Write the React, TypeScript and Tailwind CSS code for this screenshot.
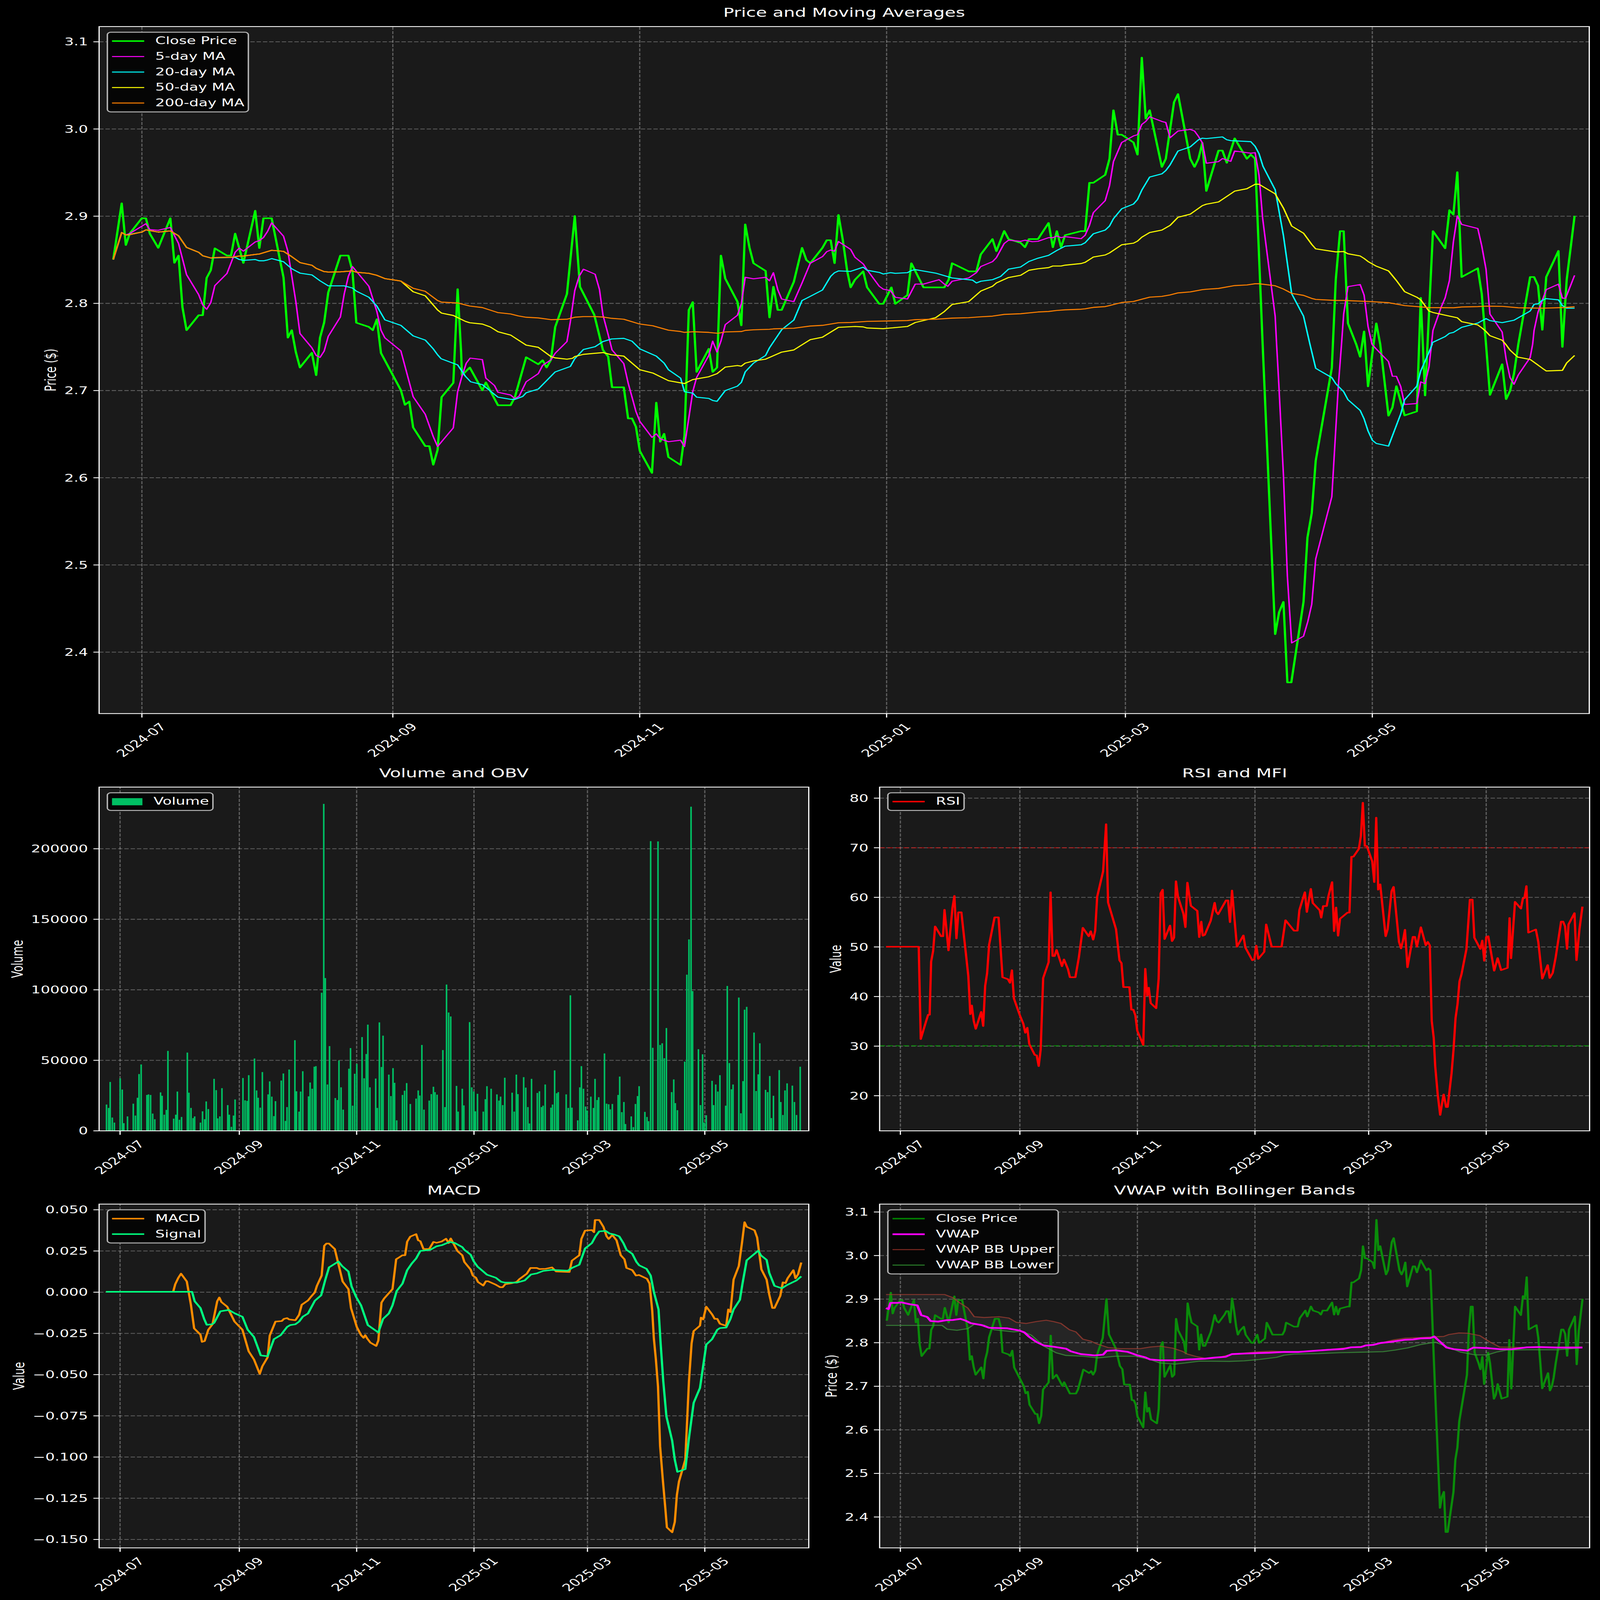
import React from "react";

type P = [number, number];
const seg = (ox: number, sx: number, oy: number, sy: number, a: number[]): P[] => {
  const r: P[] = [];
  for (let i = 0; i < a.length; i += 2) r.push([ox + a[i] / sx, oy + a[i + 1] / sy]);
  return r;
};
const Z9 = (a: number[]) => seg(240, 1.568, 700, 1.12, a);
const Z8 = (a: number[]) => seg(1000, 0.825, 700, 1.12, a);
const Z2 = (a: number[]) => seg(2900, 0.998, 100, 1.206, a);
const Z3 = (a: number[]) => seg(2900, 0.998, 1400, 0.922, a);
const Z5 = (a: number[]) => seg(2300, 0.722, 3050, 0.871, a);
const Z6 = (a: number[]) => seg(0, 0.682, 4780, 0.908, a);
const Z7 = (a: number[]) => seg(2300, 0.722, 4780, 0.908, a);
const pts = (a: P[]) => a.map((p) => `${p[0].toFixed(1)},${p[1].toFixed(1)}`).join(" ");

const close: P[] = [
  ...Z9([120,398,157,142,175,332,192,280,245,210,263,210,280,280,317,345,370,210,388,413,406,380,423,615,441,720,494,652,512,652,529,482,547,447,565,347,618,380,636,380,654,280,690,414,742,176,760,346,778,210,814,210,866,480,885,754,902,720,920,820,938,890,990,823,1009,925,1026,754,1044,685,1062,548,1115,380,1150,380,1168,450,1185,686,1240,705,1257,720,1275,670,1293,824,1380,993,1398,1060,1417,1045,1434,1163,1487,1248,1505,1248,1522,1333,1541,1265]),
  ...Z8([193,1025,220,960,230,533,238,820,240,925,258,890,287,994,295,958,323,1062,352,1062,362,1025,388,843,416,875,426,857,435,890,445,855,455,705,482,555,500,200,512,522,545,650,565,810,577,840,586,980,613,980,623,1122,632,1122,641,1160,650,1270,678,1370,688,1050,697,1228,706,1192,716,1298,744,1334,753,1200,763,628,772,592,781,910,809,805,818,910,828,890,837,380,847,485,875,590,884,698,893,238,903,345,912,415,940,450,949,662,958,522,968,628,977,628,1005,500,1024,345,1034,400,1043,415,1071,345,1081,310,1090,310,1099,415,1108,195,1118,310,1128,450,1136,525,1146,490,1165,452,1174,525,1202,600,1211,600,1230,525,1239,600,1267,560,1276,415,1304,525,1352,525,1362,490,1370,415,1408,452,1426,452,1436,375,1463,305,1472,360,1490,268,1500,305,1528,322,1538,342,1547,305,1568,305]),
  ...Z2([30,973,42,1092,53,1013,65,1092,76,1033,121,1013,132,1013,144,776,155,776,188,737,200,658,211,420,223,540,234,540,267,578,278,638,290,162,301,461,312,420,346,698,357,658,380,380,391,341,425,658,437,698,448,658,459,580,470,816,504,618,515,618,527,678,538,618,549,558,583,658,594,638,606,658]),
  ...Z3([627,0,662,1087,673,1005,685,966,696,1268,707,1268,741,966,752,725,764,633,775,437,820,89]),
  ...Z2([823,1568,831,1250,843,1013,853,1013,865,1465,888,1568]),
  ...Z3([899,47]),
  ...Z2([910,1505]),
  ...Z3([921,158]),
  ...Z2([944,1465,955,1568]),
  ...Z3([978,268,989,237,1000,157,1023,267,1057,252]),
  ...Z2([1068,1340]),
  ...Z3([1080,192]),
  ...Z2([1102,1013,1136,1097,1148,910,1159,932,1170,724,1182,1238,1227,1195,1238,1320,1250,1568]),
  ...Z3([1261,190,1295,75,1306,206,1317,175,1328,110]),
  ...Z2([1340,1568,1373,1238,1384,1238,1395,1280,1407,1497,1418,1238,1452,1110]),
  ...Z3([1463,10]),
  ...Z2([1475,1250,1497,938]),
];

const ma5: P[] = [
  ...Z9([120,398,157,275,175,286,192,280,263,235,280,262,317,265,370,252,406,325,441,467,494,558,512,605,529,625,547,595,565,517,618,462,654,365,672,346,690,360,742,318,760,312,778,298,796,270,814,231,866,292,885,360,920,590,938,735,990,800,1009,835,1026,844,1044,815,1062,748,1115,660,1132,555,1150,475,1168,430,1240,520,1275,635,1293,720,1310,755,1380,814,1434,1023,1487,1103,1522,1205,1541,1250]),
  ...Z8([193,1228,220,1165,230,1000,240,930,250,870,259,847,287,854,295,938,315,972,323,1003,352,1015,362,1032,372,1020,388,955,416,918,426,880,445,855,455,825,482,772,490,680,500,540,510,475,520,442,547,465,557,535,565,650,577,740,586,810,613,872,623,960,641,1090,650,1135,678,1208,688,1192,697,1215,716,1228,744,1221,753,1250,763,1120,772,1000,781,935,809,835,818,770,828,820,837,770,847,695,875,652,884,600,893,479,912,486,940,479,949,495,958,458,968,535,977,578,1005,590,1024,505,1043,415,1071,385,1081,362,1090,355,1099,360,1108,316,1136,352,1146,388,1165,418,1174,445,1202,520,1211,533,1228,540,1239,570,1267,578,1285,510,1304,510,1340,490,1352,510,1360,520,1370,497,1408,482,1426,458,1436,430,1463,408,1472,390,1490,325,1500,310,1528,315,1538,310,1555,317,1568,315]),
  ...Z2([30,1045,42,1045,53,1037,65,1045,76,1040,121,1050,132,1033,144,985,155,922,188,863,200,790,211,672,234,578,267,546,278,540,290,490,301,475,312,452,346,475,357,480,369,555,391,522,425,514,437,522,448,548,459,580,470,680,504,672,515,657,538,671,549,620,594,631,606,628,617,740,627,950,640,1130,662,1430,666,1568]),
  ...Z3([672,145,685,490,696,870,708,1120,741,1095,753,1040,764,975,775,805,820,572,838,158,847,0]),
  ...Z2([853,1420,865,1285,899,1275,910,1327,921,1480,932,1568]),
  ...Z3([944,18,978,65,989,120,1000,120,1012,158,1023,226,1057,222,1068,141,1080,148,1091,85,1098,0]),
  ...Z2([1102,1500,1125,1385,1136,1340,1148,1255,1159,1065,1170,938,1182,980,1227,1000,1238,1085,1250,1200,1261,1420,1295,1508,1300,1568]),
  ...Z3([1306,55,1317,125,1328,150,1340,115,1373,50,1380,0]),
  ...Z2([1384,1500,1395,1410,1418,1300,1452,1273,1463,1342,1472,1342,1497,1230]),
];

const ma20: P[] = [
  ...Z9([120,398,157,275,175,286,245,273,263,263,317,273,370,268,406,290,441,343,494,365,512,381,547,391,618,389,654,388,672,398,690,402,742,398,760,404,778,404,796,400,814,394,866,408,902,440,938,460,990,468,1026,495,1062,518,1132,518,1168,528,1185,542,1240,570,1275,610,1310,673,1380,698,1434,746,1487,765,1522,805,1541,832]),
  ...Z8([192,850,230,878,248,930,260,955,287,968,323,1025,352,1035,362,1035,380,1022,388,1005,416,988,455,910,490,885,500,850,520,808,547,795,565,772,585,760,613,757,632,770,650,805,688,838,706,870,716,900,744,938,753,1000,772,1007,781,1025,809,1031,818,1040,828,1044,847,995,875,975,884,958,893,910,912,870,940,835,949,800,977,718,1005,674,1024,585,1034,575,1071,537,1090,475,1099,458,1108,450,1136,452,1165,433,1174,447,1202,457,1211,464,1228,458,1239,461,1267,458,1276,448,1285,444,1332,460,1370,482,1417,492,1426,505,1436,497,1463,490,1482,475,1500,442,1528,432,1547,407,1568,392]),
  ...Z2([30,1132,53,1108,76,1087,121,1080,132,1070,155,1026,188,1008,200,988,211,952,234,903,267,880,278,858,290,812,312,748,346,732,357,716,369,688,391,620,425,600,448,565,459,557,470,559,515,551,527,565,538,569,594,574,606,597,617,633,628,695,662,810,685,1035,708,1320,741,1430,759,1568]),
  ...Z3([775,90,785,98,820,125,831,148,853,178,865,208,899,248,910,280,921,325,933,360,944,372,978,382,1012,262,1023,208,1057,157,1068,100,1091,30,1100,0]),
  ...Z2([1100,1560,1136,1530,1148,1514,1159,1510,1182,1485,1227,1464,1250,1442,1261,1452,1295,1462,1328,1450,1373,1405,1384,1372,1395,1370,1407,1352,1418,1344,1452,1350,1463,1378,1475,1391,1497,1391]),
];

const ma50: P[] = [
  ...Z9([120,398,157,275,175,286,192,285,245,273,263,263,317,273,370,268,406,290,441,343,494,365,512,381,547,391,565,389,636,388,672,382,690,382,742,375,760,373,814,356,866,361,902,385,938,412,990,424,1009,438,1044,453,1062,455,1115,454,1168,450,1185,456,1240,461,1275,470,1310,485,1380,496,1434,545,1487,563,1541,628,1558,642]),
  ...Z8([220,653,248,680,258,686,287,692,305,705,323,727,352,742,388,788,416,798,445,840,455,846,482,852,495,848,500,840,520,830,565,822,585,832,613,838,650,900,680,915,716,950,753,963,772,945,809,932,828,918,847,888,875,881,884,884,893,870,912,860,940,852,977,820,1005,810,1043,763,1071,752,1108,707,1146,703,1165,705,1174,710,1211,713,1240,708,1267,703,1285,685,1332,663,1352,635,1370,603,1408,590,1436,542,1463,520,1472,505,1500,480,1528,470,1547,447,1568,440]),
  ...Z2([30,1192,42,1184,65,1184,76,1180,121,1172,132,1166,155,1140,188,1130,200,1120,234,1080,267,1072,278,1062,290,1043,312,1020,346,1008,369,985,391,945,425,930,459,888,470,881,504,870,549,817,583,805,606,783,617,783,662,830,685,900,708,988,741,1023,764,1078,775,1100,831,1115,853,1113,865,1124,899,1135,910,1147,921,1162,944,1185,978,1208,1000,1255,1023,1310,1057,1337,1068,1350,1091,1405,1102,1412,1148,1430,1170,1438,1182,1457,1227,1473,1238,1487,1250,1505,1261,1526,1295,1548,1305,1568]),
  ...Z3([1317,22,1338,48,1373,57,1395,78,1407,90,1418,100,1463,98,1475,70,1497,42]),
];

const ma200: P[] = [
  ...Z9([120,398,157,275,175,286,192,285,245,273,263,263,317,273,370,268,406,290,441,343,494,365,512,381,547,391,565,389,636,388,672,382,690,382,742,375,760,373,814,356,866,361,902,385,938,412,990,424,1009,438,1044,453,1062,455,1115,454,1168,450,1185,456,1240,461,1275,470,1310,485,1380,496,1434,529,1487,543,1541,585,1558,592]),
  ...Z8([230,596,258,610,287,617,323,640,352,646,370,655,388,661,416,664,445,672,482,670,500,661,520,658,547,658,565,660,585,666,613,670,650,692,680,700,716,720,744,726,753,730,772,727,809,730,830,734,847,728,884,726,893,721,912,718,949,716,958,714,1005,711,1043,701,1071,698,1108,686,1136,685,1174,680,1267,676,1285,672,1332,670,1370,665,1408,663,1436,659,1463,656,1490,648,1528,645,1568,637]),
  ...Z2([30,1407,53,1402,76,1399,121,1396,132,1394,155,1387,188,1383,200,1378,234,1363,267,1358,290,1347,312,1337,346,1333,369,1326,391,1316,425,1311,459,1300,470,1298,504,1294,549,1280,583,1277,606,1271,617,1271,662,1281,685,1297,708,1318,741,1328,764,1343,775,1348,831,1353,853,1353,933,1359,978,1364,1023,1378,1091,1388,1160,1389,1182,1385,1227,1383,1250,1381,1295,1382,1340,1389,1407,1391,1463,1388,1497,1384]),
];

const rsi = Z5([127,697,193,697,197,1024,208,960,212,938,215,938,218,750,222,712,226,625,238,660,242,660,245,566,253,710,261,560,265,517,269,668,273,575,279,575,288,720,293,800,297,936,300,905,304,960,308,988,319,928,323,978,327,836,331,790,335,690,346,593,354,593,362,805,373,812,377,825,381,780,385,880,397,940,404,970,408,1002,412,984,416,1042,427,1080,431,1082,435,1120,439,1062,444,808,455,752,459,504,463,730,467,730,471,708,482,766,486,742,494,776,498,805,509,805,516,735,524,630,536,660,540,642,545,672,549,640,553,520,565,430,571,263,575,540,591,635,598,745,602,755,606,840,618,840,622,920,626,920,630,940,634,995,646,1045,650,775,654,870,657,842,661,897,672,915,677,810,681,508,685,495,689,670,700,622,704,677,708,665,712,465,716,520,727,580,731,628,735,470,742,552,755,570,759,663,763,608,766,658,770,655,782,605,790,541,793,572,797,582,813,533,817,533,821,610,825,498,835,697,848,657,852,700,866,745,870,742,874,693,878,740,890,715,894,618,905,697,925,697,933,603,950,640,957,640,961,567,972,504,976,574,984,492,988,542,1002,568,1005,594,1009,553,1016,553,1020,515,1027,468,1031,642,1035,558,1039,658,1043,598,1058,576,1062,576,1066,378,1070,378,1081,350,1085,305,1089,187,1093,340,1097,340,1108,395,1112,468,1116,240,1120,495,1124,476,1135,660,1139,635,1147,500,1151,485,1158,610,1162,680,1166,703,1170,675,1174,637,1179,770,1190,662,1194,662,1198,697,1206,628,1216,692,1220,680,1224,692,1228,960,1232,1020,1235,1120,1240,1220,1245,1293,1249,1250,1252,1220,1257,1265,1260,1265,1268,1145,1272,1060,1276,950,1280,900,1284,820,1288,795,1298,705,1305,530,1310,530,1314,665,1326,705,1330,675,1334,747,1338,662,1342,660,1354,782,1361,737,1368,780,1381,772,1385,595,1388,738,1396,538,1408,562,1412,525,1415,525,1419,482,1423,647,1438,636,1443,680,1451,810,1462,762,1466,808,1472,790,1478,735,1489,608,1493,608,1497,625,1501,705,1504,618,1516,578,1520,745,1526,635,1532,555]);

const macd = Z6([202,430,330,430,334,402,340,378,345,363,356,392,364,480,370,565,382,588,385,615,390,612,397,570,405,550,414,465,418,451,422,468,433,485,447,540,462,570,474,650,484,680,495,733,500,705,510,672,514,592,525,540,537,538,541,530,547,527,551,532,563,535,570,515,575,478,587,462,592,450,600,432,604,408,613,370,618,260,622,252,627,252,638,272,644,320,653,392,664,420,669,490,680,560,688,590,693,600,696,590,700,603,706,618,717,630,721,610,727,470,732,455,748,420,755,310,767,295,772,295,776,245,782,226,793,217,797,240,801,243,807,272,818,272,826,246,832,249,842,244,850,234,855,250,859,233,872,280,881,295,885,320,897,348,901,370,907,378,911,394,921,407,926,391,930,391,945,404,953,413,958,413,963,402,976,398,985,393,990,383,1004,363,1011,342,1023,342,1028,346,1040,345,1052,340,1060,355,1085,357,1090,315,1104,295,1108,235,1115,204,1128,202,1132,210,1134,165,1142,165,1150,190,1156,225,1160,235,1167,220,1175,240,1183,295,1190,310,1194,342,1205,350,1212,370,1218,368,1233,382,1238,400,1243,500,1246,600,1250,680,1254,780,1258,1000,1263,1120,1268,1230,1271,1300,1281,1318,1286,1280,1290,1180,1294,1130,1306,1050,1313,760,1318,620,1322,575,1334,555,1336,525,1340,532,1346,485,1357,513,1362,530,1367,530,1372,548,1384,556,1388,495,1392,505,1398,385,1408,335,1414,250,1419,173,1423,190,1438,203,1443,230,1451,347,1461,385,1466,440,1472,490,1476,490,1487,445,1492,395,1497,398,1501,380,1512,350,1516,380,1521,365,1527,322]);

const signal = Z6([202,430,366,430,371,465,382,490,389,530,394,552,404,550,408,545,420,502,436,497,448,510,462,522,472,570,484,597,497,665,510,668,522,605,535,590,547,560,553,553,563,550,570,540,577,522,587,510,600,463,612,443,620,385,627,340,645,318,652,335,664,355,670,410,679,450,688,480,701,553,721,580,730,530,741,510,748,480,756,427,767,400,776,350,785,325,793,307,801,279,820,275,832,262,842,258,857,246,867,250,881,265,885,275,897,293,903,318,910,337,921,355,928,367,945,378,955,393,962,396,985,396,1000,388,1012,366,1023,362,1035,353,1052,349,1060,350,1082,352,1090,342,1104,330,1115,270,1128,250,1135,225,1142,207,1154,205,1162,215,1170,218,1180,225,1188,250,1194,275,1205,290,1213,320,1218,332,1232,345,1240,370,1246,430,1255,495,1259,620,1264,760,1270,890,1281,980,1286,1050,1291,1095,1306,1085,1313,970,1322,840,1334,785,1346,625,1357,605,1367,570,1372,564,1384,562,1392,530,1398,495,1410,460,1415,400,1423,314,1445,278,1450,295,1461,312,1466,360,1476,408,1490,417,1500,405,1518,388,1527,373]);

const vwap = Z7([127,490,132,494,136,471,150,471,158,469,175,476,190,480,198,516,210,523,217,538,232,540,248,535,262,534,277,530,287,536,298,546,320,553,335,563,372,565,396,573,406,580,415,595,430,615,445,628,465,633,490,640,500,650,520,660,548,665,565,662,572,648,590,646,615,652,635,665,650,672,660,680,680,683,710,683,735,680,770,677,790,673,812,670,825,660,850,658,880,656,900,655,930,652,960,652,990,648,1020,644,1050,641,1065,635,1085,634,1095,628,1110,626,1125,619,1145,615,1175,607,1190,606,1205,602,1225,601,1233,595,1245,615,1258,636,1272,642,1300,647,1312,636,1340,638,1365,642,1390,642,1420,635,1445,634,1480,636,1532,636]);
const bbUp = Z7([127,440,245,440,262,452,275,470,292,490,305,522,325,525,355,522,375,527,390,543,410,547,430,540,450,535,465,540,480,547,497,570,510,578,524,605,540,612,552,622,575,636,600,640,640,640,660,634,680,631,705,638,725,650,735,660,755,670,775,677,800,672,825,660,875,652,905,649,930,651,960,652,1000,646,1040,640,1065,635,1085,632,1105,626,1130,617,1150,608,1175,601,1205,599,1235,596,1252,595,1262,588,1283,582,1300,583,1325,592,1345,615,1365,634,1420,636,1532,634]);
const bbLo = Z7([127,554,240,554,250,568,270,572,292,566,305,550,325,553,345,570,385,578,400,575,420,590,445,630,470,655,490,665,525,668,555,674,590,668,630,668,660,680,680,693,710,697,730,693,760,686,820,687,850,685,880,680,915,672,930,664,950,660,1000,658,1040,655,1085,653,1130,651,1155,645,1180,637,1205,625,1235,616,1255,630,1285,652,1315,663,1340,663,1360,652,1380,645,1420,644,1480,644,1532,637]);

const closeV: P[] = close.map(([x, y]) => [2516 + ((x - 396.5) / 11.31) * 5.385, 5106 + ((y - 524.5) / 3546) * 1772]);

const volRaw = [203,1256,207,1268,210,1176,214,1302,218,1320,229,1163,233,1203,236,1322,243,1298,254,1253,258,1295,262,1232,265,1148,269,1114,280,1222,283,1220,287,1222,291,1288,295,1308,306,1213,309,1225,313,1292,317,1275,320,1066,331,1306,335,1292,338,1210,342,1310,346,1300,357,1072,360,1214,364,1268,368,1304,371,1298,382,1320,386,1280,390,1308,393,1245,397,1272,408,1165,412,1205,415,1305,419,1298,423,1198,434,1258,437,1292,441,1335,445,1295,448,1238,463,1162,467,1241,471,1243,474,1152,485,1093,489,1206,492,1232,496,1267,500,1141,511,1220,514,1174,518,1228,522,1297,525,1244,536,1171,540,1146,544,1314,547,1265,551,1132,562,1028,565,1209,570,1281,573,1210,577,1138,588,1227,591,1178,595,1200,599,1122,602,1120,613,860,617,191,620,808,624,1185,628,1049,639,1233,643,1240,646,1100,650,1195,654,1274,665,1129,668,1056,672,1260,676,1147,680,1112,690,1017,694,1163,698,1077,701,973,705,1195,716,1164,719,1268,723,965,727,1123,730,1012,741,1150,745,1226,749,1127,752,1179,756,1312,767,1222,771,1207,775,1180,782,1254,793,1235,797,1206,800,1224,804,1045,808,1274,818,1242,822,1219,826,1193,829,1212,833,1221,844,1063,848,1265,851,831,855,930,859,944,870,1190,873,1281,881,1200,884,1259,895,964,899,1195,903,1210,906,1280,910,1218,921,1281,925,1237,928,1191,936,1200,947,1220,951,1242,954,1228,958,1258,962,1161,976,1214,980,1281,984,1150,987,1219,998,1159,1002,1196,1006,1265,1009,1323,1013,1165,1024,1215,1028,1209,1032,1265,1035,1260,1039,1185,1050,1267,1053,1256,1057,1135,1061,1216,1064,1212,1079,1220,1083,1268,1087,869,1090,1267,1101,1312,1105,1195,1108,1120,1112,1200,1116,1263,1119,1277,1126,1228,1131,1268,1134,1165,1138,1240,1141,1230,1152,1075,1156,1253,1160,1255,1163,1273,1167,1254,1178,1222,1181,1157,1185,1283,1189,1247,1192,1325,1203,1298,1207,1336,1211,1254,1215,1226,1218,1191,1229,1282,1233,1300,1236,1315,1240,323,1244,1055,1254,324,1258,1045,1262,1039,1266,1092,1270,985,1280,1212,1284,1167,1287,1251,1291,1276,1305,1104,1309,796,1313,671,1317,201,1320,854,1331,1060,1335,1258,1339,1078,1342,1320,1346,1294,1357,1172,1360,1258,1364,1185,1368,1210,1372,1152,1383,1260,1386,836,1390,1109,1394,1202,1397,1185,1408,877,1412,1287,1416,1173,1419,920,1423,910,1437,1001,1441,1208,1445,1149,1448,1039,1459,1204,1463,1212,1467,1155,1470,1304,1474,1225,1485,1134,1488,1247,1492,1293,1496,1206,1500,1181,1510,1189,1514,1247,1518,1293,1525,1122];
const bars = seg(0, 0.682, 3050, 0.871, volRaw);

const DAYS = [0, 62, 123, 184, 243, 304];
const DATES = ["2024-07", "2024-09", "2024-11", "2025-01", "2025-03", "2025-05"];

type Box = { x: number; y: number; w: number; h: number };
type Tick = { y: number; label: string };

function Frame({ box, x0, perDay, ticks, yLabel, yLabelX, children }: { box: Box; x0: number; perDay: number; ticks: Tick[]; yLabel: string; yLabelX: number; children: React.ReactNode }) {
  const { x, y, w, h } = box;
  const b = y + h;
  const xs = DAYS.map((d) => x0 + d * perDay);
  return (
    <svg viewBox={`${x} ${y} ${w} ${h}`} className="block h-full w-full overflow-visible">
      <g stroke="#ffffff" strokeOpacity="0.3" strokeWidth="3.33" strokeDasharray="12.3 5.3">
        {xs.map((v) => (
          <line key={v} x1={v} x2={v} y1={b} y2={y} />
        ))}
        {ticks.map((t) => (
          <line key={t.label} x1={x} x2={x + w} y1={t.y} y2={t.y} />
        ))}
      </g>
      {children}
      <rect x={x} y={y} width={w} height={h} fill="none" stroke="#ffffff" strokeWidth="3.33" />
      <g stroke="#ffffff" strokeWidth="3.33">
        {xs.map((v) => (
          <line key={v} x1={v} x2={v} y1={b} y2={b + 16} />
        ))}
        {ticks.map((t) => (
          <line key={t.label} x1={x - 16} x2={x} y1={t.y} y2={t.y} />
        ))}
      </g>
      <g fill="#ffffff">
        {ticks.map((t) => (
          <text key={t.label} x={x - 31} y={t.y + 15} textAnchor="end">
            {t.label}
          </text>
        ))}
        {xs.map((v, i) => (
          <text key={v} textAnchor="middle" dy="15" transform={`translate(${v - 2} ${b + 107}) rotate(-45)`}>
            {DATES[i]}
          </text>
        ))}
        <text textAnchor="middle" dy="15" transform={`translate(${yLabelX} ${y + h / 2}) rotate(-90)`}>
          {yLabel}
        </text>
      </g>
    </svg>
  );
}

function Line({ p, c, w, o }: { p: P[]; c: string; w: number; o?: number }) {
  return <polyline points={pts(p)} fill="none" stroke={c} strokeWidth={w} strokeOpacity={o ?? 1} strokeLinejoin="round" strokeLinecap="butt" />;
}

function Legend({ items }: { items: { label: string; swatch: string }[] }) {
  return (
    <div className="absolute left-[21px] top-[21px] rounded-[12px] border-[4px] border-[#b3b3b3] bg-[#050505] py-[2.5px] pl-[11px] pr-[9px]">
      {items.map((it) => (
        <div key={it.label} className="flex h-[63px] items-center gap-[31px] leading-none">
          <span className={it.swatch} />
          <span className="-translate-y-[1px]">{it.label}</span>
        </div>
      ))}
    </div>
  );
}

const priceTicks = (top: number, step: number, hi: number) =>
  [0, 1, 2, 3, 4, 5, 6, 7].map((i) => ({ y: top + i * step, label: (hi - i * 0.1).toFixed(1) }));

const MainBox: Box = { x: 277, y: 108, w: 4164, h: 2794 };
const VolBox: Box = { x: 277, y: 3201, w: 1983, h: 1398 };
const RsiBox: Box = { x: 2458, y: 3201, w: 1984, h: 1398 };
const MacdBox: Box = { x: 277, y: 4897, w: 1983, h: 1398 };
const VwapBox: Box = { x: 2458, y: 4897, w: 1984, h: 1398 };

const titleCls = "flex items-end justify-center pb-[31px] text-[50px] font-normal leading-none";

export default function App() {
  const fit = `scale(${window.innerWidth / 4471}, ${window.innerHeight / 6507})`;
  return (
    <div className="h-screen w-screen overflow-hidden bg-black">
      <div style={{ transform: fit }} className="flex h-[6507px] w-[4471px] origin-top-left flex-col bg-black font-['DejaVu_Sans',sans-serif] text-[41.67px] text-white">
        <section className="pl-[277px] pr-[30px]">
          <h2 className={`h-[108px] ${titleCls}`}>Price and Moving Averages</h2>
          <div className="relative h-[2794px] bg-[#1a1a1a]">
            <Frame box={MainBox} x0={396.5} perDay={11.31} ticks={priceTicks(170, 354.6, 3.1)} yLabel="Price ($)" yLabelX={141}>
              <Line p={close} c="#00ff00" w={6.25} />
              <Line p={ma5} c="#ff00ff" w={4.17} />
              <Line p={ma20} c="#00ffff" w={4.17} />
              <Line p={ma50} c="#ffff00" w={4.17} />
              <Line p={ma200} c="#ff8000" w={4.17} />
            </Frame>
            <Legend
              items={[
                { label: "Close Price", swatch: "h-[6px] w-[90px] bg-[#00ff00]" },
                { label: "5-day MA", swatch: "h-[4px] w-[90px] bg-[#ff00ff]" },
                { label: "20-day MA", swatch: "h-[4px] w-[90px] bg-[#00ffff]" },
                { label: "50-day MA", swatch: "h-[4px] w-[90px] bg-[#ffff00]" },
                { label: "200-day MA", swatch: "h-[4px] w-[90px] bg-[#ff8000]" },
              ]}
            />
          </div>
        </section>

        <div className="grid grid-cols-[1983px_1984px] gap-x-[198px] pl-[277px]">
          <section>
            <h2 className={`h-[299px] ${titleCls}`}>Volume and OBV</h2>
            <div className="relative h-[1398px] bg-[#1a1a1a]">
              <Frame
                box={VolBox}
                x0={335.5}
                perDay={5.375}
                ticks={[0, 50000, 100000, 150000, 200000].map((v) => ({ y: 4599 - (v / 50000) * 286.8, label: String(v) }))}
                yLabel="Volume"
                yLabelX={48}
              >
                {bars.map(([x, y], i) => (
                  <rect key={i} x={x - 2.2} y={y} width={4.4} height={4599 - y} fill="#00bf63" />
                ))}
              </Frame>
              <Legend items={[{ label: "Volume", swatch: "h-[29px] w-[85px] bg-[#00bf63]" }]} />
            </div>
          </section>

          <section>
            <h2 className={`h-[299px] ${titleCls}`}>RSI and MFI</h2>
            <div className="relative h-[1398px] bg-[#1a1a1a]">
              <Frame
                box={RsiBox}
                x0={2516}
                perDay={5.385}
                ticks={[80, 70, 60, 50, 40, 30, 20].map((v, i) => ({ y: 3246 + i * 201.7, label: String(v) }))}
                yLabel="Value"
                yLabelX={2335}
              >
                <line x1={2458} x2={4442} y1={3447.7} y2={3447.7} stroke="#ff0000" strokeOpacity="0.5" strokeWidth="4.17" strokeDasharray="15.4 6.7" />
                <line x1={2458} x2={4442} y1={4253} y2={4253} stroke="#00a000" strokeOpacity="0.7" strokeWidth="4.17" strokeDasharray="15.4 6.7" />
                <Line p={rsi} c="#ff0000" w={6.25} />
              </Frame>
              <Legend items={[{ label: "RSI", swatch: "h-[6px] w-[90px] bg-[#ff0000]" }]} />
            </div>
          </section>
        </div>

        <div className="grid grid-cols-[1983px_1984px] gap-x-[198px] pl-[277px]">
          <section>
            <h2 className={`h-[298px] ${titleCls}`}>MACD</h2>
            <div className="relative h-[1398px] bg-[#1a1a1a]">
              <Frame
                box={MacdBox}
                x0={335.5}
                perDay={5.375}
                ticks={["0.050", "0.025", "0.000", "\u22120.025", "\u22120.050", "\u22120.075", "\u22120.100", "\u22120.125", "\u22120.150"].map((label, i) => ({ y: 4920 + i * 167.6, label }))}
                yLabel="Value"
                yLabelX={53}
              >
                <Line p={macd} c="#ff8c00" w={6.25} />
                <Line p={signal} c="#00ff7f" w={6.25} />
              </Frame>
              <Legend
                items={[
                  { label: "MACD", swatch: "h-[6px] w-[90px] bg-[#ff8c00]" },
                  { label: "Signal", swatch: "h-[6px] w-[90px] bg-[#00ff7f]" },
                ]}
              />
            </div>
          </section>

          <section>
            <h2 className={`h-[298px] ${titleCls}`}>VWAP with Bollinger Bands</h2>
            <div className="relative h-[1398px] bg-[#1a1a1a]">
              <Frame box={VwapBox} x0={2516} perDay={5.385} ticks={priceTicks(4929, 177.2, 3.1)} yLabel="Price ($)" yLabelX={2323.5}>
                <polygon points={pts([...bbUp, ...[...bbLo].reverse()])} fill="#ffffff" fillOpacity="0.05" />
                <Line p={closeV} c="#0a8c0a" w={6.25} />
                <Line p={bbUp} c="#a03c32" w={4.17} o={0.75} />
                <Line p={bbLo} c="#3c9a3c" w={4.17} o={0.75} />
                <Line p={vwap} c="#ff00ff" w={7} />
              </Frame>
              <Legend
                items={[
                  { label: "Close Price", swatch: "h-[6px] w-[90px] bg-[#008000]" },
                  { label: "VWAP", swatch: "h-[7px] w-[90px] bg-[#ff00ff]" },
                  { label: "VWAP BB Upper", swatch: "h-[4px] w-[90px] bg-[#7f2a22]" },
                  { label: "VWAP BB Lower", swatch: "h-[4px] w-[90px] bg-[#2a7f2a]" },
                ]}
              />
            </div>
          </section>
        </div>
      </div>
    </div>
  );
}
